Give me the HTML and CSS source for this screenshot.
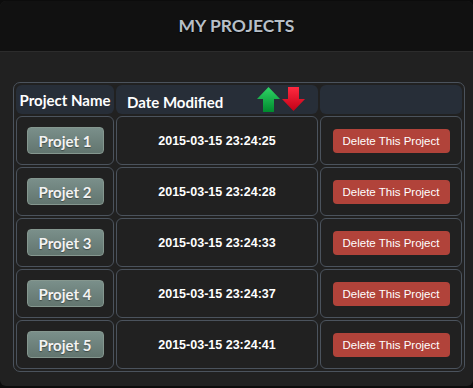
FILE: index.html
```html
<!DOCTYPE html>
<html lang="en">
<head>
  <meta charset="UTF-8" />
  <title>My Projects</title>
  <link rel="stylesheet" href="styles.css">
</head>
<body>
  <div class="panel">
    <div class="panel-head">MY PROJECTS</div>
    <div class="panel-body">
      <table class="projects">
        <thead>
          <tr>
            <th class="col-name">Project Name</th>
            <th class="col-date">
              <span class="date-label">Date Modified</span>
              <span class="sort">
                <svg width="23" height="25" viewBox="0 0 23 25">
                  <defs>
                    <linearGradient id="gUp" x1="0" y1="0" x2="0" y2="1">
                      <stop offset="0" stop-color="#2fd466"/>
                      <stop offset="1" stop-color="#008a2e"/>
                    </linearGradient>
                  </defs>
                  <polygon points="11.5,0 23,12 17,12 17,25 6,25 6,12 0,12" fill="url(#gUp)"/>
                </svg>
                <svg width="23" height="24" viewBox="0 0 23 24">
                  <defs>
                    <linearGradient id="gDown" x1="0" y1="0" x2="0" y2="1">
                      <stop offset="0" stop-color="#ff2a40"/>
                      <stop offset="1" stop-color="#c20016"/>
                    </linearGradient>
                  </defs>
                  <polygon points="6,0 17,0 17,12 23,12 11.5,24 0,12 6,12" fill="url(#gDown)"/>
                </svg>
              </span>
            </th>
            <th class="col-action"></th>
          </tr>
        </thead>
        <tbody>
          <tr>
            <td><button class="btn-project">Projet 1</button></td>
            <td class="date">2015-03-15 23:24:25</td>
            <td><button class="btn-delete">Delete This Project</button></td>
          </tr>
          <tr>
            <td><button class="btn-project">Projet 2</button></td>
            <td class="date">2015-03-15 23:24:28</td>
            <td><button class="btn-delete">Delete This Project</button></td>
          </tr>
          <tr>
            <td><button class="btn-project">Projet 3</button></td>
            <td class="date">2015-03-15 23:24:33</td>
            <td><button class="btn-delete">Delete This Project</button></td>
          </tr>
          <tr>
            <td><button class="btn-project">Projet 4</button></td>
            <td class="date">2015-03-15 23:24:37</td>
            <td><button class="btn-delete">Delete This Project</button></td>
          </tr>
          <tr>
            <td><button class="btn-project">Projet 5</button></td>
            <td class="date">2015-03-15 23:24:41</td>
            <td><button class="btn-delete">Delete This Project</button></td>
          </tr>
        </tbody>
      </table>
    </div>
  </div>
</body>
</html>
```

FILE: styles.css
```css
body, html {
  margin: 0;
  padding: 0;
  background-color: #0c0c0c;
  font-family: Lato, "Open Sans", sans-serif;
  height: 100%;
  overflow: hidden;
}
.panel {
  margin-top: 1px;
  height: 385px;
  border-radius: 6px;
  overflow: hidden;
  background: #212121;
}
.panel-head {
  height: 50px;
  line-height: 50px;
  background: #111;
  border-bottom: 1px solid #2c2c2c;
  text-align: center;
  color: #b7bfc7;
  font-weight: bold;
  font-size: 17.5px;
  text-shadow: 0 1px 1px #000;
}
.panel-body {
  padding: 30px 0 0 13px;
}
.projects {
  border-collapse: separate;
  border-spacing: 2px;
  border: 1px solid #4b535d;
  border-radius: 7px;
}
.projects th {
  background: #272e38;
  border-radius: 6px;
  height: 29px;
  padding: 0;
  color: #fff;
  font-size: 15px;
  font-weight: bold;
  text-align: center;
}
.col-name {
  width: 98px;
}
.col-date {
  width: 202px;
}
.col-action {
  width: 142px;
}
.projects th.col-date {
  text-align: left;
  vertical-align: bottom;
}
.date-label {
  display: inline-block;
  padding: 0 0 3px 11px;
  vertical-align: bottom;
}
.sort {
  display: inline-flex;
  gap: 2px;
  margin-left: 30px;
  vertical-align: bottom;
  padding-bottom: 2px;
}
.projects td {
  height: 47px;
  padding: 0;
  border: 1px solid #4b535d;
  border-radius: 6px;
  text-align: center;
}
.projects td.date {
  color: #fff;
  font-family: "Liberation Sans", Arial, sans-serif;
  font-weight: bold;
  font-size: 12.5px;
}
.btn-project {
  width: 77px;
  height: 27px;
  padding: 0;
  border: 1px solid #85978f;
  border-radius: 4px;
  background: linear-gradient(#7a8f8a, #62756f);
  color: #f3f3f3;
  font-family: Lato, "Open Sans", sans-serif;
  font-size: 15px;
  font-weight: bold;
  text-shadow: 0 1px 1px #3f4b48;
}
.btn-delete {
  width: 117px;
  height: 24px;
  padding: 0;
  border: none;
  border-radius: 4px;
  background: #b1433a;
  color: #fff;
  font-family: "Liberation Sans", Arial, sans-serif;
  font-size: 11.5px;
}
```
